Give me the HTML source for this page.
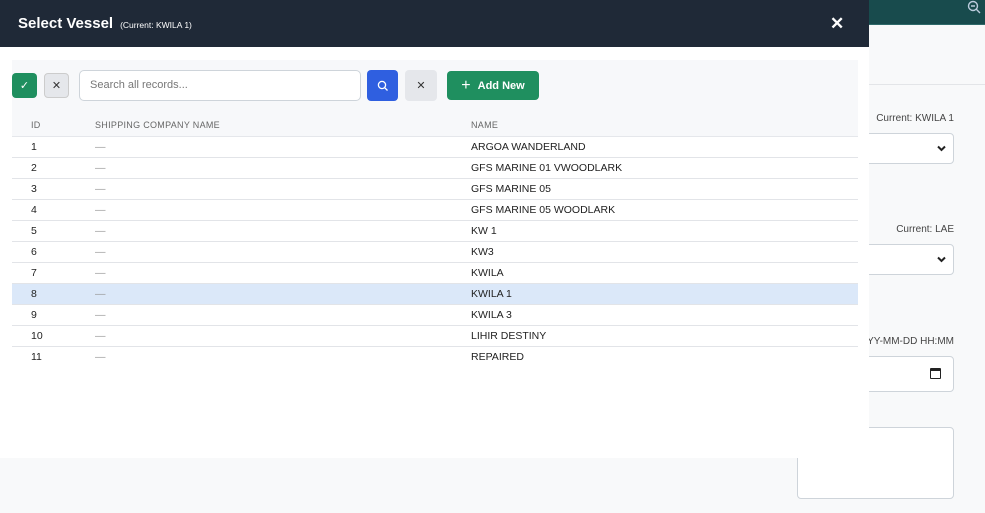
<!DOCTYPE html>
<html><head><meta charset="utf-8"><style>
*{box-sizing:border-box;margin:0;padding:0}
body{width:985px;height:513px;overflow:hidden;background:#f8f9fa;font-family:"Liberation Sans",sans-serif;position:relative;color:#222}
.top{position:absolute;left:0;top:0;width:985px;height:25px;background:#184b4d;border-bottom:1px solid #2f6a6a}
.hr{position:absolute;left:869px;top:84px;width:116px;height:1px;background:#e3e5e8}
.lbl{position:absolute;font-size:10px;color:#444;right:31px}
.inp{position:absolute;left:860px;width:94px;background:#fff;border:1px solid #ced4da;border-radius:4px}
.chev{position:absolute;right:7px;top:11px}
.modal{position:absolute;left:0;top:0;width:869px;height:458px;background:#fff}
.hdr{height:47px;background:#1f2937;color:#fff;display:flex;align-items:center;padding-left:18px}
.hdr b{font-size:15px}
.hdr span{font-size:8.5px;margin-left:7px;margin-top:3px}
.close{position:absolute;left:830px;top:14px;color:#fff;font-size:17px;font-weight:bold}
.panel{position:absolute;left:12px;top:60px;width:846px;height:77px;background:#f7f8fa;border-bottom:1px solid #e5e7eb}
.btn{position:absolute;border-radius:4px;display:flex;align-items:center;justify-content:center;font-size:13px}
.hd{position:absolute;top:120px;font-size:9px;color:#666;letter-spacing:.3px}
.row{position:absolute;left:12px;width:846px;height:21px;border-bottom:1px solid #e2e4e8;font-size:10.5px}
.row div{position:absolute;top:4px}
</style></head><body>
<div class="top"><svg style="position:absolute;left:967px;top:0" width="14" height="14" viewBox="0 0 14 14"><circle cx="6" cy="6" r="4.5" fill="none" stroke="#bcd" stroke-width="1.4"/><path d="M9.3 9.3L13 13M4 6h4" stroke="#bcd" stroke-width="1.4"/></svg></div>
<div class="hr"></div>
<div class="lbl" style="top:113px">Current: KWILA 1</div>
<div class="inp" style="top:133px;height:31px"><svg class="chev" width="9" height="7" viewBox="0 0 9 7"><path d="M1 1.5L4.5 5L8 1.5" fill="none" stroke="#222" stroke-width="2"/></svg></div>
<div class="lbl" style="top:224px">Current: LAE</div>
<div class="inp" style="top:244px;height:31px"><svg class="chev" width="9" height="7" viewBox="0 0 9 7"><path d="M1 1.5L4.5 5L8 1.5" fill="none" stroke="#222" stroke-width="2"/></svg></div>
<div class="lbl" style="top:336px">YY-MM-DD HH:MM</div>
<div class="inp" style="top:356px;height:36px"><span style="position:absolute;right:12px;top:11px;width:11px;height:11px;border:1.5px solid #222;border-top-width:3px;border-radius:1px"></span></div>
<div style="position:absolute;left:797px;top:427px;width:157px;height:72px;background:#fff;border:1px solid #ced4da;border-radius:4px"></div>
<div style="position:absolute;left:0;top:458px;width:797px;height:55px;background:#f8f9fa"></div>
<div class="modal">
<div class="hdr"><b>Select Vessel</b><span>(Current: KWILA 1)</span></div>
<div class="close">✕</div>
<div class="panel"></div>
<div class="btn" style="left:12px;top:73px;width:25px;height:25px;background:#1f8f5f;color:#fff;font-size:11px">✓</div>
<div class="btn" style="left:44px;top:73px;width:25px;height:25px;background:#e5e7eb;border:1px solid #ccc;color:#333;font-size:11px">✕</div>
<div style="position:absolute;left:79px;top:70px;width:282px;height:31px;border:1px solid #ced4da;border-radius:5px;background:#fff;font-size:11px;color:#777;padding:8px 10px">Search all records...</div>
<div class="btn" style="left:367px;top:70px;width:31px;height:31px;background:#2f5fe0"><svg width="12" height="12" viewBox="0 0 12 12"><circle cx="5" cy="5" r="3.6" fill="none" stroke="#fff" stroke-width="1.3"/><path d="M7.7 7.7L10.5 10.5" stroke="#fff" stroke-width="1.3"/></svg></div>
<div class="btn" style="left:405px;top:70px;width:32px;height:31px;background:#e5e7eb;color:#333;font-size:11px">✕</div>
<div class="btn" style="left:447px;top:71px;width:92px;height:29px;background:#1f8f5f;color:#fff;font-weight:bold;font-size:11px"><span style="font-size:16px;font-weight:normal;margin-right:7px">+</span>Add New</div>
<div class="hd" style="left:31px">ID</div>
<div class="hd" style="left:95px">SHIPPING COMPANY NAME</div>
<div class="hd" style="left:471px">NAME</div>
<div class="row" style="top:137px"><div style="left:19px">1</div><div style="left:83px;color:#999">—</div><div style="left:459px">ARGOA WANDERLAND</div></div>
<div class="row" style="top:158px"><div style="left:19px">2</div><div style="left:83px;color:#999">—</div><div style="left:459px">GFS MARINE 01 VWOODLARK</div></div>
<div class="row" style="top:179px"><div style="left:19px">3</div><div style="left:83px;color:#999">—</div><div style="left:459px">GFS MARINE 05</div></div>
<div class="row" style="top:200px"><div style="left:19px">4</div><div style="left:83px;color:#999">—</div><div style="left:459px">GFS MARINE 05 WOODLARK</div></div>
<div class="row" style="top:221px"><div style="left:19px">5</div><div style="left:83px;color:#999">—</div><div style="left:459px">KW 1</div></div>
<div class="row" style="top:242px"><div style="left:19px">6</div><div style="left:83px;color:#999">—</div><div style="left:459px">KW3</div></div>
<div class="row" style="top:263px"><div style="left:19px">7</div><div style="left:83px;color:#999">—</div><div style="left:459px">KWILA</div></div>
<div class="row" style="top:284px;background:#dbe8f9"><div style="left:19px">8</div><div style="left:83px;color:#999">—</div><div style="left:459px">KWILA 1</div></div>
<div class="row" style="top:305px"><div style="left:19px">9</div><div style="left:83px;color:#999">—</div><div style="left:459px">KWILA 3</div></div>
<div class="row" style="top:326px"><div style="left:19px">10</div><div style="left:83px;color:#999">—</div><div style="left:459px">LIHIR DESTINY</div></div>
<div class="row" style="top:347px;border-bottom:none"><div style="left:19px">11</div><div style="left:83px;color:#999">—</div><div style="left:459px">REPAIRED</div></div>
</div>
</body></html>
